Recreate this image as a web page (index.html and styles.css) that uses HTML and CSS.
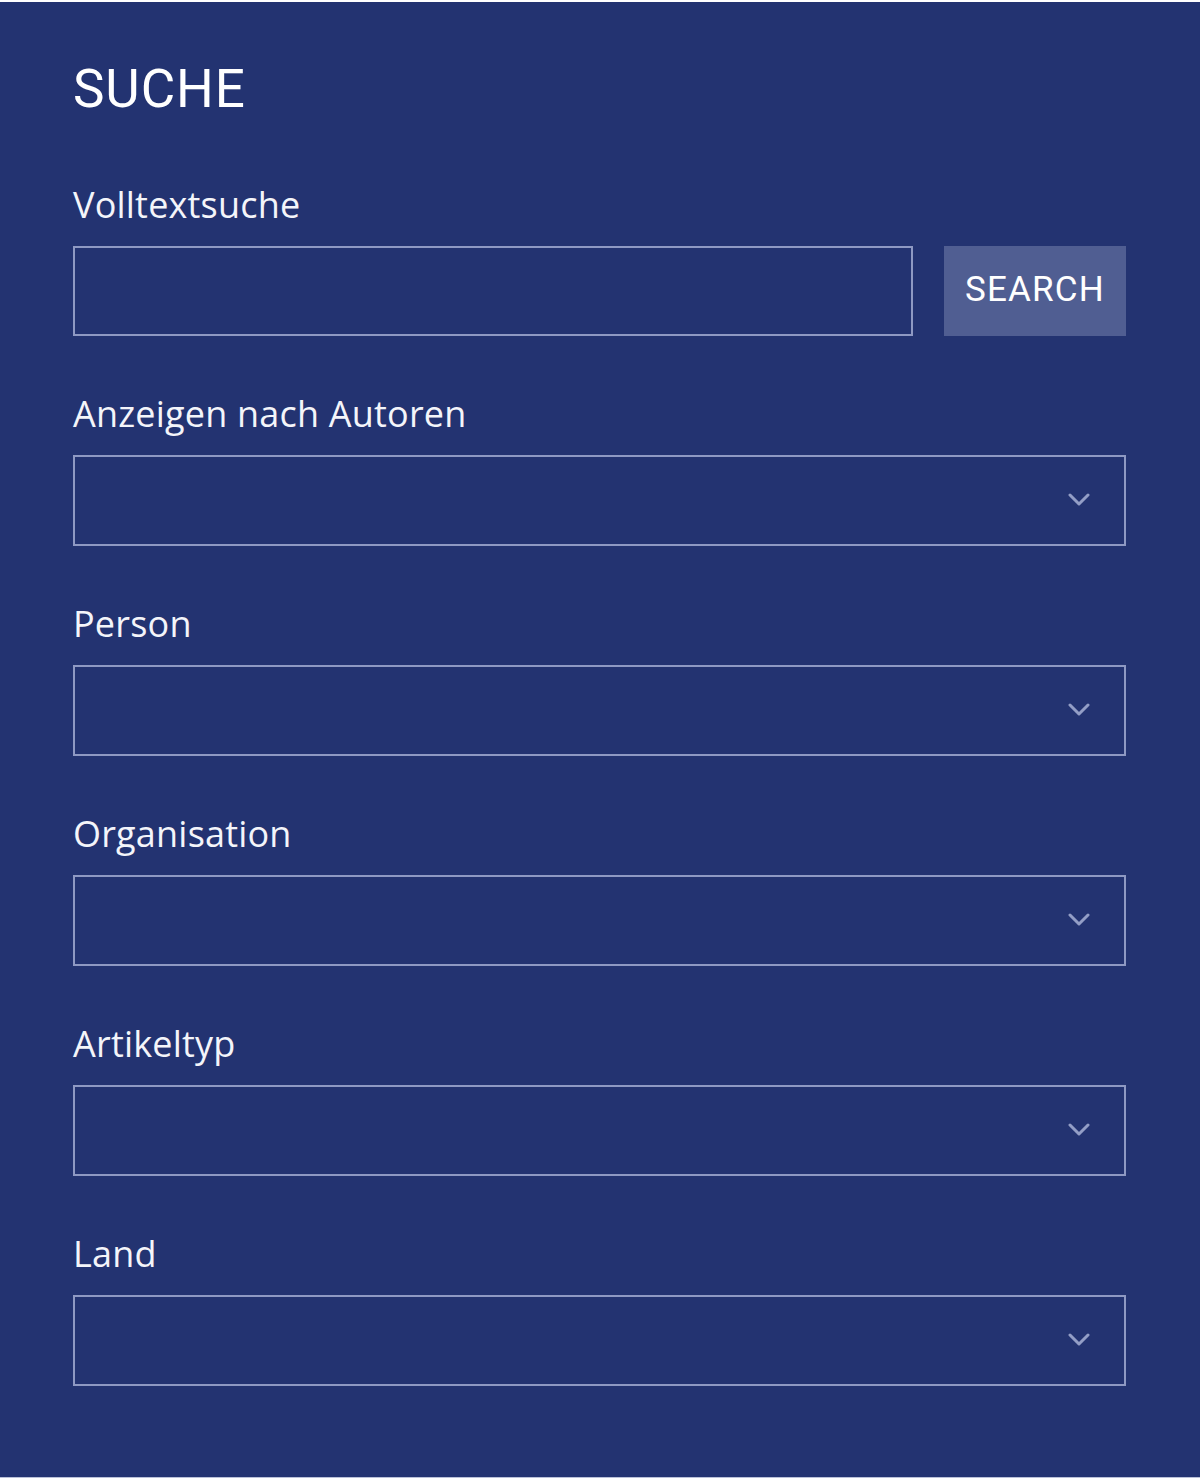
FILE: index.html
```html
<!DOCTYPE html>
<html lang="de">
<head>
<meta charset="utf-8">
<title>Suche</title>
<link rel="stylesheet" href="styles.css">
</head>
<body>
<section class="panel">
  <h2 class="title">SUCHE</h2>

  <div class="field field-first">
    <label class="label" for="q">Volltextsuche</label>
    <div class="search-row">
      <input class="text-input" id="q" type="text">
      <button class="search-btn" type="button">SEARCH</button>
    </div>
  </div>

  <div class="field">
    <div class="label">Anzeigen nach Autoren</div>
    <div class="select" role="combobox" aria-expanded="false">
      <svg class="chevron" viewBox="0 0 22 14" width="22" height="14"><polyline points="2,2 11,11 20,2"/></svg>
    </div>
  </div>

  <div class="field">
    <div class="label">Person</div>
    <div class="select" role="combobox" aria-expanded="false">
      <svg class="chevron" viewBox="0 0 22 14" width="22" height="14"><polyline points="2,2 11,11 20,2"/></svg>
    </div>
  </div>

  <div class="field">
    <div class="label">Organisation</div>
    <div class="select" role="combobox" aria-expanded="false">
      <svg class="chevron" viewBox="0 0 22 14" width="22" height="14"><polyline points="2,2 11,11 20,2"/></svg>
    </div>
  </div>

  <div class="field">
    <div class="label">Artikeltyp</div>
    <div class="select" role="combobox" aria-expanded="false">
      <svg class="chevron" viewBox="0 0 22 14" width="22" height="14"><polyline points="2,2 11,11 20,2"/></svg>
    </div>
  </div>

  <div class="field">
    <div class="label">Land</div>
    <div class="select" role="combobox" aria-expanded="false">
      <svg class="chevron" viewBox="0 0 22 14" width="22" height="14"><polyline points="2,2 11,11 20,2"/></svg>
    </div>
  </div>
</section>
</body>
</html>
```

FILE: styles.css
```css
* { box-sizing: border-box; }

html, body {
  margin: 0;
  padding: 0;
  background: #ffffff;
}

body {
  padding-top: 2px;
  padding-bottom: 2px;
  background: #ffffff;
}

.panel {
  background: #233371;
  padding: 57px 74px 91px 73px;
  box-shadow: 0 1px 0 #b9c0d8;
}

.title {
  margin: 0;
  font-family: Roboto, "Liberation Sans", sans-serif;
  font-weight: 400;
  font-size: 53px;
  line-height: 60px;
  color: #ffffff;
  letter-spacing: 0.9px;
}

.field {
  display: flex;
  flex-direction: column;
  margin-top: 56px;
}

.field-first {
  margin-top: 64px;
}

.label {
  display: block;
  font-family: "Open Sans", "Liberation Sans", sans-serif;
  font-weight: 400;
  font-size: 36px;
  line-height: 44px;
  color: #f4f5fa;
  letter-spacing: 0.2px;
  margin-bottom: 19px;
}

.search-row {
  display: flex;
  gap: 31px;
  align-items: stretch;
}

.text-input {
  flex: 1;
  height: 90px;
  margin: 0;
  border: 2px solid #8e99c3;
  background: transparent;
  color: #ffffff;
  font-family: "Open Sans", sans-serif;
  font-size: 32px;
  padding: 0 20px;
  outline: none;
  border-radius: 0;
}

.search-btn {
  width: 182px;
  height: 90px;
  margin: 0;
  border: 0;
  border-radius: 0;
  background: #505e92;
  color: #ffffff;
  font-family: Roboto, "Liberation Sans", sans-serif;
  font-weight: 400;
  font-size: 35px;
  letter-spacing: 1.2px;
  padding: 0 0 4px 0;
  display: flex;
  align-items: center;
  justify-content: center;
  cursor: pointer;
}

.select {
  height: 91px;
  border: 2px solid #8e99c3;
  display: flex;
  align-items: center;
  justify-content: flex-end;
  padding-right: 34px;
}

.chevron {
  display: block;
  width: 22px;
  height: 14px;
  margin-top: -2px;
}

.chevron polyline {
  fill: none;
  stroke: #939ec6;
  stroke-width: 3;
  stroke-linecap: round;
  stroke-linejoin: round;
}
```
